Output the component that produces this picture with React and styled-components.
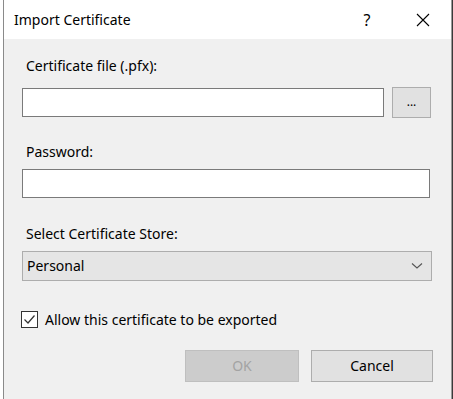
import React from "react";
import styled, { createGlobalStyle } from "styled-components";

const Global = createGlobalStyle`
  html, body { margin: 0; padding: 0; background: #ffffff; }
  body { font-family: "Noto Sans", "Open Sans", sans-serif; }
  #root { width: 453px; height: 399px; overflow: hidden; }
`;

const Screen = styled.div`
  display: flex;
  height: 399px;
  padding-left: 3px;
  box-sizing: border-box;
`;

const Dialog = styled.div`
  width: 449px;
  height: 399px;
  box-sizing: border-box;
  border-left: 1px solid #8a8a8a;
  border-right: 1px solid #9a9a9a;
  display: flex;
  flex-direction: column;
  background: #f0f0f0;
  box-shadow: 1px 0 0 #3a3a3a;
`;

const TitleBar = styled.div`
  height: 39px;
  flex: none;
  background: #ffffff;
  display: flex;
  align-items: center;
  padding: 0 5px 0 10px;
  color: #000;
  font-size: 14px;
`;

const Title = styled.div`
  flex: 1;
  padding-bottom: 1px;
`;

const TitleButton = styled.div`
  width: 46px;
  height: 39px;
  display: flex;
  align-items: center;
  justify-content: center;
  font-size: 16px;
  color: #000;
  margin-left: ${(p) => p.$gap || 0}px;
`;

const Body = styled.div`
  flex: 1;
  display: flex;
  flex-direction: column;
  padding: 17px 0 0 18px;
  color: #000;
  font-size: 14px;
`;

const Label = styled.div`
  height: 20px;
  line-height: 20px;
  padding-left: 4px;
  margin-top: ${(p) => p.$top || 0}px;
`;

const Row = styled.div`
  display: flex;
  align-items: center;
  gap: 8px;
  margin-top: ${(p) => p.$top || 0}px;
`;

const TextBox = styled.div`
  width: ${(p) => p.$w}px;
  height: 29px;
  box-sizing: border-box;
  background: #ffffff;
  border: 1px solid #7a7a7a;
`;

const BrowseButton = styled.div`
  width: 39px;
  height: 31px;
  box-sizing: border-box;
  background: #e1e1e1;
  border: 1px solid #adadad;
  display: flex;
  align-items: center;
  justify-content: center;
  font-size: 12px;
  color: #000;
  padding-bottom: 2px;
`;

const Select = styled.div`
  width: 410px;
  height: 30px;
  box-sizing: border-box;
  background: #e5e5e5;
  border: 1px solid #adadad;
  display: flex;
  align-items: center;
  padding: 0 8px 0 4px;
  margin-top: 7px;
`;

const SelectText = styled.div`
  flex: 1;
  padding-bottom: 1px;
`;

const CheckRow = styled.div`
  display: flex;
  align-items: center;
  gap: 7px;
  margin-top: 29px;
  height: 18px;
`;

const CheckBox = styled.div`
  width: 17px;
  height: 17px;
  box-sizing: border-box;
  border: 1px solid #333333;
  background: #ffffff;
  display: flex;
  align-items: center;
  justify-content: center;
  margin-left: -1px;
`;

const Buttons = styled.div`
  display: flex;
  justify-content: flex-end;
  gap: 12px;
  margin-top: 22px;
  padding-right: 18px;
`;

const Button = styled.div`
  width: ${(p) => p.$w}px;
  height: 32px;
  box-sizing: border-box;
  display: flex;
  align-items: center;
  justify-content: center;
  padding-bottom: 1px;
  background: ${(p) => (p.$disabled ? "#cccccc" : "#e1e1e1")};
  border: 1px solid ${(p) => (p.$disabled ? "#bfbfbf" : "#adadad")};
  color: ${(p) => (p.$disabled ? "#a3a3a3" : "#000")};
`;

export default function App() {
  return (
    <>
      <Global />
      <Screen>
        <Dialog>
          <TitleBar>
            <Title>Import Certificate</Title>
            <TitleButton>?</TitleButton>
            <TitleButton $gap={10}>
              <svg width="14" height="14" viewBox="0 0 14 14">
                <path d="M1 1 L13 13 M13 1 L1 13" stroke="#000" strokeWidth="1.1" />
              </svg>
            </TitleButton>
          </TitleBar>
          <Body>
            <Label>Certificate file (.pfx):</Label>
            <Row $top={11}>
              <TextBox $w={362} />
              <BrowseButton>...</BrowseButton>
            </Row>
            <Label $top={24}>Password:</Label>
            <Row $top={7}>
              <TextBox $w={408} />
            </Row>
            <Label $top={26}>Select Certificate Store:</Label>
            <Select>
              <SelectText>Personal</SelectText>
              <svg width="12" height="8" viewBox="0 0 12 8">
                <path d="M1 1.5 L6 6 L11 1.5" stroke="#555" strokeWidth="1.1" fill="none" />
              </svg>
            </Select>
            <CheckRow>
              <CheckBox>
                <svg width="13" height="13" viewBox="0 0 13 13">
                  <path d="M1.5 6.5 L5 10 L11.5 2.5" stroke="#333" strokeWidth="1.2" fill="none" />
                </svg>
              </CheckBox>
              <span>Allow this certificate to be exported</span>
            </CheckRow>
            <Buttons>
              <Button $w={114} $disabled>OK</Button>
              <Button $w={122}>Cancel</Button>
            </Buttons>
          </Body>
        </Dialog>
      </Screen>
    </>
  );
}
